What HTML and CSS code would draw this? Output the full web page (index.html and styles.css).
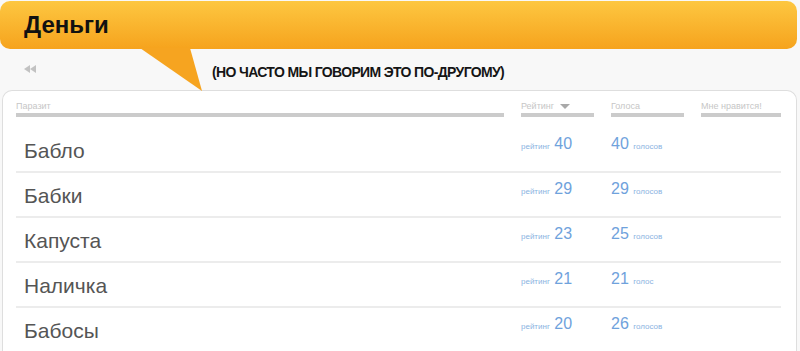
FILE: index.html
```html
<!DOCTYPE html>
<html lang="ru">
<head>
<meta charset="utf-8">
<title>Деньги</title>
<link rel="stylesheet" href="styles.css">
</head>
<body>
<div class="page">
  <header class="banner"><h1>Деньги</h1></header>
  <div class="subbar">
    <a class="back" href="#" aria-label="Назад"><svg width="12" height="8" viewBox="0 0 12 8"><polygon points="6,0 0,4 6,8" fill="#c2c2c2"/><polygon points="12,0 6,4 12,8" fill="#c2c2c2"/></svg></a>
    <p class="subtitle">(НО ЧАСТО МЫ ГОВОРИМ ЭТО ПО-ДРУГОМУ)</p>
    <span class="tail"></span>
  </div>
  <section class="card">
    <div class="grid thead">
      <div class="th">Паразит</div>
      <div class="th">Рейтинг <span class="sort"></span></div>
      <div class="th">Голоса</div>
      <div class="th">Мне нравится!</div>
    </div>
    <div class="grid row">
      <div class="name">Бабло</div>
      <div class="val"><small>рейтинг</small> <b>40</b></div>
      <div class="val"><b>40</b> <small>голосов</small></div>
      <div></div>
    </div>
    <div class="grid row">
      <div class="name">Бабки</div>
      <div class="val"><small>рейтинг</small> <b>29</b></div>
      <div class="val"><b>29</b> <small>голосов</small></div>
      <div></div>
    </div>
    <div class="grid row">
      <div class="name">Капуста</div>
      <div class="val"><small>рейтинг</small> <b>23</b></div>
      <div class="val"><b>25</b> <small>голосов</small></div>
      <div></div>
    </div>
    <div class="grid row">
      <div class="name">Наличка</div>
      <div class="val"><small>рейтинг</small> <b>21</b></div>
      <div class="val"><b>21</b> <small>голос</small></div>
      <div></div>
    </div>
    <div class="grid row">
      <div class="name">Бабосы</div>
      <div class="val"><small>рейтинг</small> <b>20</b></div>
      <div class="val"><b>26</b> <small>голосов</small></div>
      <div></div>
    </div>
  </section>
</div>
</body>
</html>
```

FILE: styles.css
```css
* { box-sizing: border-box; }
html, body { margin: 0; padding: 0; }
body {
  background: #f8f8f8;
  font-family: "Liberation Sans", Arial, sans-serif;
  overflow: hidden;
}
.page { width: 800px; padding-top: 1px; }
.banner {
  width: 797px;
  height: 48px;
  border-radius: 10px;
  background: linear-gradient(#fdc741, #f6a31d);
}
.banner h1 {
  margin: 0;
  padding-left: 24px;
  font-size: 24px;
  line-height: 48px;
  font-weight: bold;
  color: #111;
}
.subbar {
  position: relative;
  height: 41px;
  display: flex;
  align-items: center;
  padding-top: 4px;
}
.back { display: flex; margin-left: 24px; margin-bottom: 6px; }
.subtitle {
  margin: 0 0 0 176px;
  font-size: 14px;
  font-weight: bold;
  letter-spacing: -0.65px;
  color: #151515;
}
.tail {
  position: absolute;
  left: 140px;
  top: -1px;
  width: 62px;
  height: 43px;
  background: #f6a420;
  clip-path: polygon(0 0, 50px 0, 100% 100%);
  z-index: 2;
}
.card {
  position: relative;
  z-index: 1;
  margin-left: 2px;
  width: 795px;
  height: 270px;
  background: #fff;
  border: 1px solid #dedede;
  border-bottom: none;
  border-radius: 10px 10px 0 0;
  padding: 10px 0 0 13px;
}
.grid {
  display: grid;
  grid-template-columns: 488px 73px 73px 80px;
  column-gap: 17px;
}
.thead { margin-bottom: 11px; }
.th {
  font-size: 9px;
  line-height: 11px;
  color: #c6c6c6;
  border-bottom: 4px solid #cbcbcb;
  padding-bottom: 1px;
}
.sort {
  display: inline-block;
  width: 0; height: 0;
  border-left: 5px solid transparent;
  border-right: 5px solid transparent;
  border-top: 5px solid #a9a9a9;
  margin-left: 3px;
  vertical-align: 0;
}
.row {
  height: 45px;
  border-bottom: 2px solid #ececec;
  width: 765px;
}
.name {
  padding: 11px 0 0 8px;
  font-size: 21px;
  line-height: 24px;
  color: #555;
}
.val {
  padding-top: 8px;
  line-height: 16px;
  color: #6fa2dc;
  white-space: nowrap;
}
.val b { font-weight: normal; font-size: 16px; }
.val small { font-size: 8px; color: #8ab3e1; }
```
